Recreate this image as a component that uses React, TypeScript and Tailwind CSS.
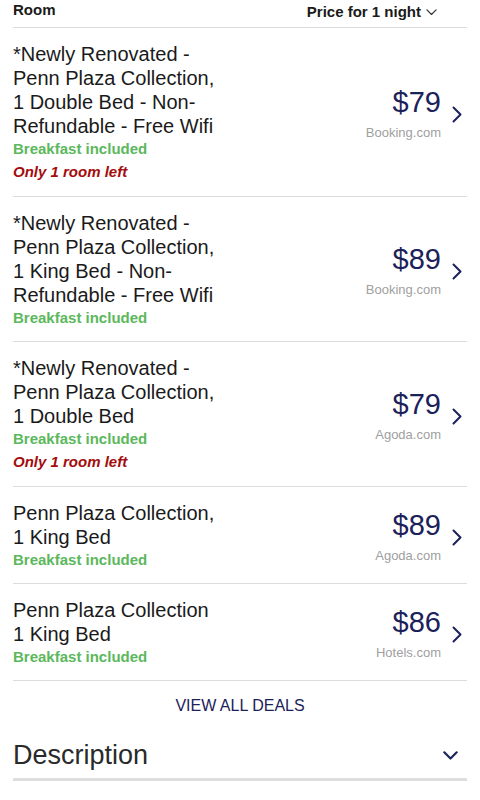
import React from "react";

interface Deal {
  lines: string[];
  price: string;
  source: string;
  lastRoom?: boolean;
}

const deals: Deal[] = [
  {
    lines: [
      "*Newly Renovated -",
      "Penn Plaza Collection,",
      "1 Double Bed - Non-",
      "Refundable - Free Wifi",
    ],
    price: "$79",
    source: "Booking.com",
    lastRoom: true,
  },
  {
    lines: [
      "*Newly Renovated -",
      "Penn Plaza Collection,",
      "1 King Bed - Non-",
      "Refundable - Free Wifi",
    ],
    price: "$89",
    source: "Booking.com",
  },
  {
    lines: ["*Newly Renovated -", "Penn Plaza Collection,", "1 Double Bed"],
    price: "$79",
    source: "Agoda.com",
    lastRoom: true,
  },
  {
    lines: ["Penn Plaza Collection,", "1 King Bed"],
    price: "$89",
    source: "Agoda.com",
  },
  {
    lines: ["Penn Plaza Collection", "1 King Bed"],
    price: "$86",
    source: "Hotels.com",
  },
];

function ChevronRight() {
  return (
    <svg width="10" height="17" viewBox="0 0 10 17" fill="none">
      <path
        d="M1.5 1.5 L8.5 8.5 L1.5 15.5"
        stroke="#1b2159"
        strokeWidth="2"
        strokeLinecap="round"
        strokeLinejoin="round"
      />
    </svg>
  );
}

function ChevronDown({ size = 14, color = "#1b2159", width = 2 }) {
  return (
    <svg width={size} height={size * 0.6} viewBox="0 0 14 8.4" fill="none">
      <path
        d="M1.2 1.2 L7 7 L12.8 1.2"
        stroke={color}
        strokeWidth={width}
        strokeLinecap="round"
        strokeLinejoin="round"
      />
    </svg>
  );
}

function DealRow({ deal }: { deal: Deal }) {
  return (
    <div className="flex items-center border-b border-[#dcdcdc] pt-[14px] pb-[12px]">
      <div className="flex-1">
        <p className="text-[20px] leading-[24px] text-[#1a1a1a]">
          {deal.lines.map((line, i) => (
            <span key={i} className="block">
              {line}
            </span>
          ))}
        </p>
        <p className="text-[15px] leading-[22px] font-bold text-[#5cb85c]">
          Breakfast included
        </p>
        {deal.lastRoom && (
          <p className="text-[15px] leading-[24px] font-bold italic text-[#a30d0d]">
            Only 1 room left
          </p>
        )}
      </div>
      <div className="flex items-center">
        <div className="text-right">
          <div className="text-[29px] leading-[36px] text-[#1b2159]">
            {deal.price}
          </div>
          <div className="mt-[4px] text-[13px] leading-[18px] text-[#a0a0a0]">
            {deal.source}
          </div>
        </div>
        <div className="ml-[11px] mr-[5px] pt-[2px]">
          <ChevronRight />
        </div>
      </div>
    </div>
  );
}

export default function App() {
  return (
    <div
      className="w-[480px] h-[800px] overflow-hidden bg-white px-[13px]"
      style={{ fontFamily: '"Liberation Sans", Arial, sans-serif' }}
    >
      <div className="flex h-[28px] items-start justify-between border-b border-[#dcdcdc] pt-[1px]">
        <span className="text-[15px] leading-[18px] font-bold text-[#1a1a1a]">
          Room
        </span>
        <div className="mr-[30px] mt-[2px] flex items-center gap-[5px]">
          <span className="text-[15px] leading-[18px] font-bold text-[#1a1a1a]">
            Price for 1 night
          </span>
          <ChevronDown size={11} color="#333" width={1.5} />
        </div>
      </div>

      {deals.map((deal, i) => (
        <DealRow key={i} deal={deal} />
      ))}

      <div className="flex h-[50px] items-center justify-center">
        <span className="text-[16px] text-[#1b2159]">VIEW ALL DEALS</span>
      </div>

      <div className="flex h-[50px] items-center justify-between border-b-[3px] border-[#dedede]">
        <span className="text-[27px] leading-[32px] text-[#2a2a2a]">
          Description
        </span>
        <div className="mr-[9px] mt-[2px]">
          <ChevronDown size={15} />
        </div>
      </div>
    </div>
  );
}
